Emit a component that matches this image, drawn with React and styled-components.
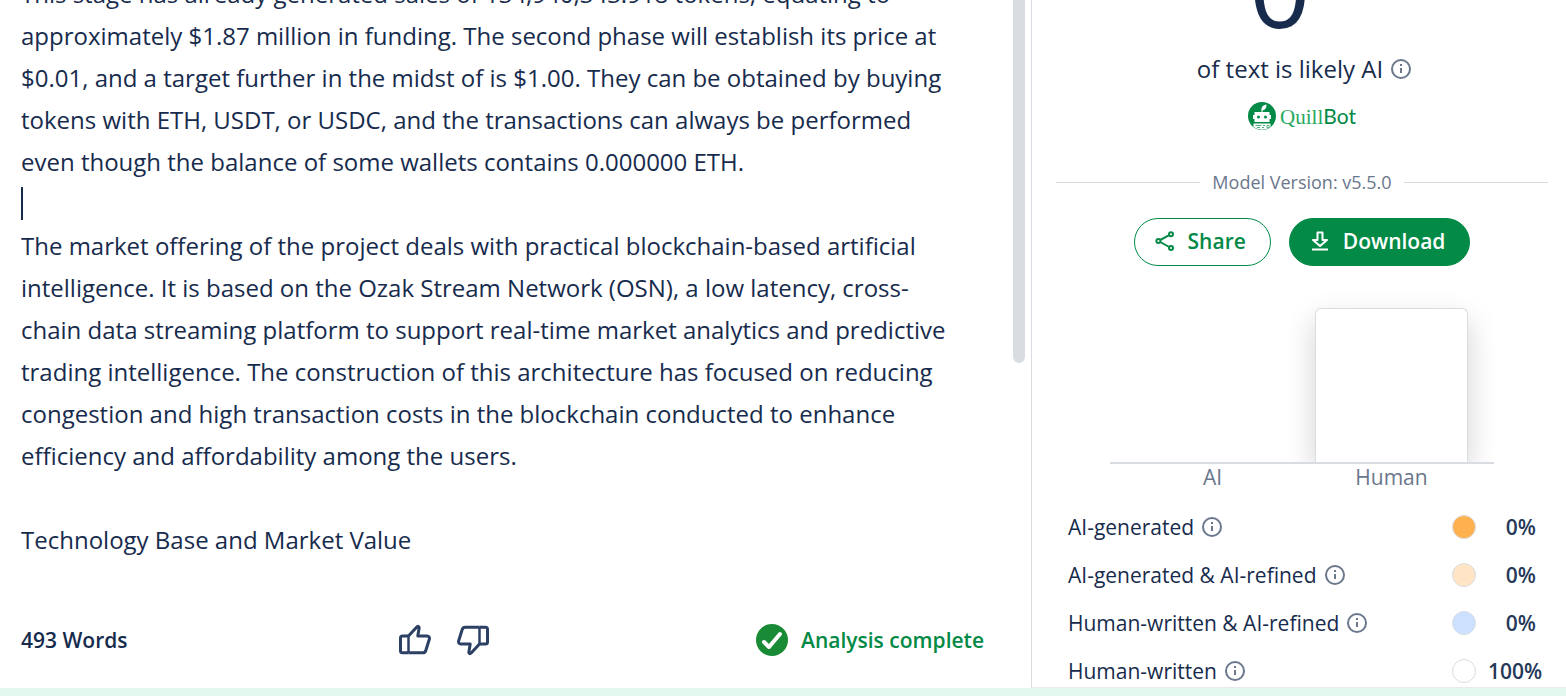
import React from "react";
import styled, { createGlobalStyle } from "styled-components";

const ink = "#172b4d";
const slate = "#6b778c";
const green = "#038a46";
const line = "#d9dde2";

const GlobalStyle = createGlobalStyle`
  * { box-sizing: border-box; }
  body {
    margin: 0;
    background: #ffffff;
    color: ${ink};
    font-family: "Open Sans", "Noto Sans", sans-serif;
  }
`;

const Page = styled.div`
  display: flex;
  flex-direction: column;
  height: 100vh;
  overflow: hidden;
`;

const Workspace = styled.main`
  display: flex;
  flex: 1;
  min-height: 0;
  background: #ffffff;
`;

const BottomStrip = styled.footer`
  height: 8px;
  background: #e3f9ef;
`;

const EditorColumn = styled.section`
  display: flex;
  flex-direction: column;
  flex: 1;
  min-width: 0;
`;

const EditorArea = styled.div`
  display: flex;
  flex: 1;
  min-height: 0;
  padding: 0 6px 0 21px;
`;

const EditorViewport = styled.div`
  display: flex;
  flex: 1;
  flex-direction: column;
  justify-content: flex-end;
  min-width: 0;
  overflow: hidden;
  padding: 0 56px 31px 0;
`;

const Sheet = styled.div`
  position: relative;
  display: flex;
`;

const EditorText = styled.textarea`
  display: block;
  flex: 1;
  min-width: 0;
  padding: 0;
  border: 0;
  outline: 0;
  resize: none;
  overflow: hidden;
  background: transparent;
  color: inherit;
  font-family: inherit;
  font-size: 24px;
  line-height: 42px;
`;

const Caret = styled.span`
  position: absolute;
  left: 0;
  top: 214px;
  width: 2px;
  height: 33px;
  background: ${ink};
`;

const ScrollTrack = styled.div`
  width: 12px;
`;

const ScrollThumb = styled.div`
  height: 363px;
  border-radius: 0 0 6px 6px;
  background: ${line};
`;

const StatusBar = styled.div`
  display: grid;
  grid-template-columns: 1fr auto 1fr;
  align-items: center;
  height: 96px;
  padding: 0 47px 0 21px;
  font-size: 21px;
  font-weight: 600;
  line-height: 28px;
`;

const VoteGroup = styled.div`
  display: flex;
  gap: 24px;
  padding-right: 117px;
`;

const IconButton = styled.button`
  display: flex;
  padding: 0;
  border: 0;
  background: none;
  color: ${ink};
  cursor: pointer;
`;

const Status = styled.div`
  display: flex;
  align-items: center;
  justify-content: flex-end;
  gap: 13px;
  color: ${green};
  white-space: nowrap;
`;

const ResultPanel = styled.aside`
  display: flex;
  flex-direction: column;
  flex: 0 0 535px;
  overflow: hidden;
  padding: 0 18px 0 24px;
  border-left: 1px solid ${line};
  border-bottom: 1px solid #e8eaec;
`;

const Score = styled.div`
  display: flex;
  flex-direction: column;
  align-items: center;
  height: 168px;
  justify-content: flex-end;
`;

const ScoreValue = styled.div`
  padding-right: 44px;
  font-size: 108px;
  font-weight: 500;
  line-height: 128px;
`;

const ScoreCaption = styled.div`
  display: flex;
  align-items: center;
  gap: 8px;
  padding-left: 4px;
  font-size: 24px;
  line-height: 36px;
`;

const Brand = styled.div`
  display: flex;
  align-items: center;
  gap: 4px;
  margin: 15px 0 38px;
  height: 28px;
  color: ${green};
  font-size: 21px;
  line-height: 28px;
`;

const BrandSerif = styled.span`
  color: #27a960;
  font-family: "Liberation Serif", serif;
`;

const BrandSans = styled.span`
  font-family: Lato, sans-serif;
`;

const Version = styled.div`
  display: flex;
  align-items: center;
  gap: 12px;
  color: ${slate};
  font-size: 18px;
  line-height: 28px;

  &::before,
  &::after {
    content: "";
    flex: 1;
    height: 1px;
    background: ${line};
  }
`;

const Actions = styled.div`
  display: flex;
  justify-content: center;
  gap: 18px;
  margin-top: 22px;
`;

const PillButton = styled.button`
  display: flex;
  align-items: center;
  gap: 13px;
  height: 48px;
  padding: 0 24px 2px 20px;
  border: 1px solid ${green};
  border-radius: 24px;
  background: ${(p) => (p.$filled ? green : "#ffffff")};
  color: ${(p) => (p.$filled ? "#ffffff" : green)};
  font-family: inherit;
  font-size: 21px;
  font-weight: 600;
  cursor: pointer;
`;

const Chart = styled.div`
  margin: 24px 54px 0;
`;

const Plot = styled.div`
  display: grid;
  grid-template-columns: 1fr 1fr;
  align-items: end;
  justify-items: center;
  height: 174px;
  padding: 0 13px;
  border-bottom: 2px solid ${line};
  overflow: hidden;
`;

const Bar = styled.div`
  width: 153px;
  border: 1px solid ${line};
  border-bottom: 0;
  border-radius: 6px 6px 0 0;
  background: #ffffff;
  box-shadow: 0 12px 30px rgba(0, 0, 0, 0.18);
`;

const ChartLabels = styled.div`
  display: grid;
  grid-template-columns: 1fr 1fr;
  padding: 0 13px;
  color: ${slate};
  font-size: 21px;
  line-height: 26px;
  text-align: center;
`;

const Legend = styled.ul`
  margin: 13px 0 0;
  padding: 0 12px;
  list-style: none;
`;

const LegendRow = styled.li`
  display: flex;
  align-items: center;
  height: 48px;
  font-size: 21px;
  line-height: 28px;
`;

const LegendName = styled.span`
  display: flex;
  flex: 1;
  align-items: center;
  gap: 8px;
`;

const Dot = styled.span`
  width: 24px;
  height: 24px;
  margin-right: 12px;
  border: 1px solid ${line};
  border-radius: 50%;
  background: ${(p) => p.$color};
`;

const Percent = styled.span`
  display: flex;
  justify-content: ${(p) => (p.$wide ? "flex-start" : "flex-end")};
  width: 48px;
  color: #253858;
  font-weight: 600;
`;

const InfoIcon = () => (
  <svg width="20" height="20" viewBox="0 0 20 20" fill="none" stroke={slate} strokeWidth="2" aria-hidden="true">
    <circle cx="10" cy="10" r="9" />
    <path d="M10 9v5M10 5v2" />
  </svg>
);

const ShareIcon = () => (
  <svg width="20" height="20" viewBox="0 0 20 20" fill="none" stroke="currentColor" strokeWidth="2" aria-hidden="true">
    <circle cx="3.4" cy="10" r="2" />
    <circle cx="16" cy="3.2" r="2" />
    <circle cx="16" cy="17" r="2" />
    <path d="M5.200 9 14.200 4.200M5.200 11l9 5" />
  </svg>
);

const DownloadIcon = () => (
  <svg width="20" height="20" viewBox="0 0 20 20" fill="none" stroke="currentColor" strokeWidth="2" aria-hidden="true">
    <path d="M7.500 1.500h5V9H17l-7 6-7-6h4.500z" strokeLinejoin="round" />
    <path d="M2 18.500h16" />
  </svg>
);

const ThumbIcon = ({ down }) => (
  <svg width="34" height="32" viewBox="0 0 34 32" fill="none" stroke="#2c4064" strokeWidth="3" strokeLinejoin="round" aria-hidden="true">
    <g transform={down ? "rotate(180 17 16)" : undefined}>
      <path d="M10.500 12 18.800 3q1.800-1.600 2.400.6L19.800 12H29q3 .3 2.400 3l-3.600 11.500q-.7 2.300-3 2.300H10.500" />
      <path d="M10.500 12H4.500q-2 0-2 2v12.800q0 2 2 2h6" />
      <path d="M10.500 12v17" strokeWidth="2.500" />
    </g>
  </svg>
);

const CheckIcon = () => (
  <svg width="32" height="32" viewBox="0 0 32 32" aria-hidden="true">
    <circle cx="16" cy="16" r="16" fill="#198a36" />
    <path d="M8 18l5 5L24 10" fill="none" stroke="#fff" strokeWidth="4" strokeLinecap="round" strokeLinejoin="round" />
  </svg>
);

const BotIcon = () => (
  <svg width="28" height="28" viewBox="0 0 28 28" aria-hidden="true">
    <circle cx="14" cy="14" r="14" fill={green} />
    <path d="M6.500 10h15v3H23v4h-1.500v3h-15v-3H5v-4h1.500z" fill="#fff" />
    <path d="M13.500 8.500c-.6-3.200 1.300-5.500 5-6.100.3 3.400-1.400 5.300-4 6.100V10h-1z" fill="#fff" />
    <circle cx="10.500" cy="15" r="1.500" fill={green} />
    <circle cx="17.500" cy="15" r="1.500" fill={green} />
    <path d="M5.500 21.500h17v3.500q-8.500 5.500-17 0z" fill="#fff" />
    <path d="M7.500 23.500h6M15 23.500h2M9 25.500h3M14 25.500h2" stroke={green} strokeWidth="1" opacity=".7" />
    <circle cx="20" cy="24.500" r="1.300" fill="none" stroke={green} strokeWidth="1" opacity=".7" />
  </svg>
);

const article = `This stage has already generated sales of 134,940,343.918 tokens, equating to approximately $1.87 million in funding. The second phase will establish its price at $0.01, and a target further in the midst of is $1.00. They can be obtained by buying tokens with ETH, USDT, or USDC, and the transactions can always be performed even though the balance of some wallets contains 0.000000 ETH.

The market offering of the project deals with practical blockchain-based artificial intelligence. It is based on the Ozak Stream Network (OSN), a low latency, cross-chain data streaming platform to support real-time market analytics and predictive trading intelligence. The construction of this architecture has focused on reducing congestion and high transaction costs in the blockchain conducted to enhance efficiency and affordability among the users.

Technology Base and Market Value`;

const categories = [
  { name: "AI-generated", color: "#ffb04f", value: 0 },
  { name: "AI-generated & AI-refined", color: "#ffe5c6", value: 0 },
  { name: "Human-written & AI-refined", color: "#cce0ff", value: 0 },
  { name: "Human-written", color: "#ffffff", value: 100 },
];

export default function App() {
  return (
    <Page>
      <GlobalStyle />
      <Workspace>
        <EditorColumn>
          <EditorArea>
            <EditorViewport>
              <Sheet>
                <EditorText rows={14} aria-label="Text to analyze" spellCheck={false} defaultValue={article} />
                <Caret />
              </Sheet>
            </EditorViewport>
            <ScrollTrack>
              <ScrollThumb />
            </ScrollTrack>
          </EditorArea>
          <StatusBar>
            <span>493 Words</span>
            <VoteGroup>
              <IconButton type="button" aria-label="Good result"><ThumbIcon /></IconButton>
              <IconButton type="button" aria-label="Bad result"><ThumbIcon down /></IconButton>
            </VoteGroup>
            <Status><CheckIcon />Analysis complete</Status>
          </StatusBar>
        </EditorColumn>
        <ResultPanel>
          <Score>
            <ScoreValue>0</ScoreValue>
            <ScoreCaption>of text is likely AI <InfoIcon /></ScoreCaption>
            <Brand>
              <BotIcon />
              <span><BrandSerif>Quill</BrandSerif><BrandSans>Bot</BrandSans></span>
            </Brand>
          </Score>
          <Version>Model Version: v5.5.0</Version>
          <Actions>
            <PillButton type="button"><ShareIcon />Share</PillButton>
            <PillButton type="button" $filled><DownloadIcon />Download</PillButton>
          </Actions>
          <Chart>
            <Plot>
              <span />
              <Bar style={{ height: "154px" }} />
            </Plot>
            <ChartLabels><span>AI</span><span>Human</span></ChartLabels>
          </Chart>
          <Legend>
            {categories.map((c) => (
              <LegendRow key={c.name}>
                <LegendName>{c.name} <InfoIcon /></LegendName>
                <Dot $color={c.color} />
                <Percent $wide={c.value === 100}>{c.value}%</Percent>
              </LegendRow>
            ))}
          </Legend>
        </ResultPanel>
      </Workspace>
      <BottomStrip />
    </Page>
  );
}
